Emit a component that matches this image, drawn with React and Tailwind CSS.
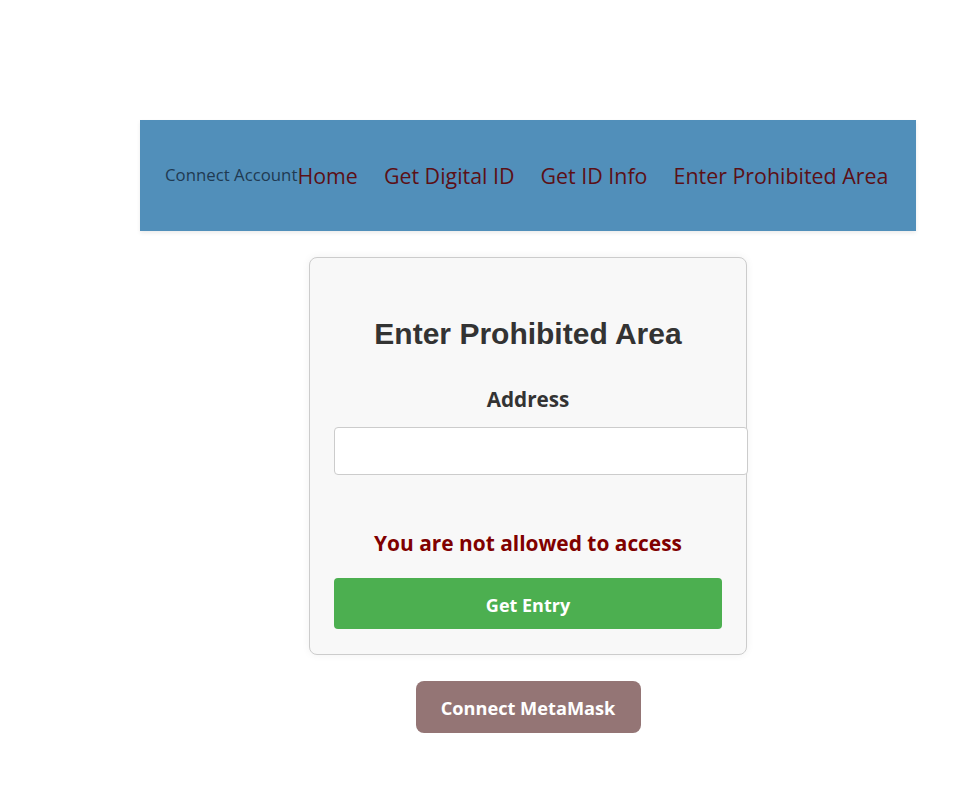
import React, { useState } from 'react'

const ui = "font-['Open_Sans',sans-serif]"

export default function App() {
  const [address, setAddress] = useState('')

  return (
    <div className={`min-h-screen bg-white ${ui}`}>
      <div className="ml-[140px] w-[776px] pt-[120px] flex flex-col items-center">
        {/* Top bar */}
        <nav className="w-full h-[111px] bg-[#518fba] shadow-[0_2px_4px_rgba(0,0,0,0.08)] flex items-center px-[25px]">
          <span className="text-[16.8px] leading-[24px] mt-[-1px] text-[#1f3a52]">Connect Account</span>
          <div className="flex items-center gap-[26px] text-[21.4px] leading-[28px] text-[#5b1016]">
            <a href="#">Home</a>
            <a href="#">Get Digital ID</a>
            <a href="#">Get ID Info</a>
            <a href="#">Enter Prohibited Area</a>
          </div>
        </nav>

        {/* Entry card */}
        <div className="mt-[26px] w-[438px] bg-[#f8f8f8] border border-[#cccccc] rounded-lg shadow-[0_0_8px_rgba(0,0,0,0.06)] px-[24px] pt-[25px] pb-[25px] flex flex-col items-center">
          <h2 className="mt-[34px] leading-[34px] text-[30px] font-bold text-[#333] font-['Liberation_Sans',Arial,sans-serif]">
            Enter Prohibited Area
          </h2>
          <label className="mt-[34px] leading-[28px] text-[20.7px] font-bold text-[#333]">Address</label>
          <input
            value={address}
            onChange={e => setAddress(e.target.value)}
            className="mt-[14px] self-start w-[414px] h-[48px] bg-white border border-[#cccccc] rounded-[4px] px-3 outline-none"
          />
          <p className="mt-[54px] leading-[28px] text-[20.9px] font-bold text-[#800000]">You are not allowed to access</p>
          <button className="mt-[21px] w-full h-[51px] pt-[4px] bg-[#4caf50] rounded-[4px] text-white text-[18px] font-bold">
            Get Entry
          </button>
        </div>

        <button className="mt-[26px] w-[225px] h-[52px] pt-[3px] bg-[#947575] rounded-lg text-white text-[18.2px] font-bold">
          Connect MetaMask
        </button>
      </div>
    </div>
  )
}
